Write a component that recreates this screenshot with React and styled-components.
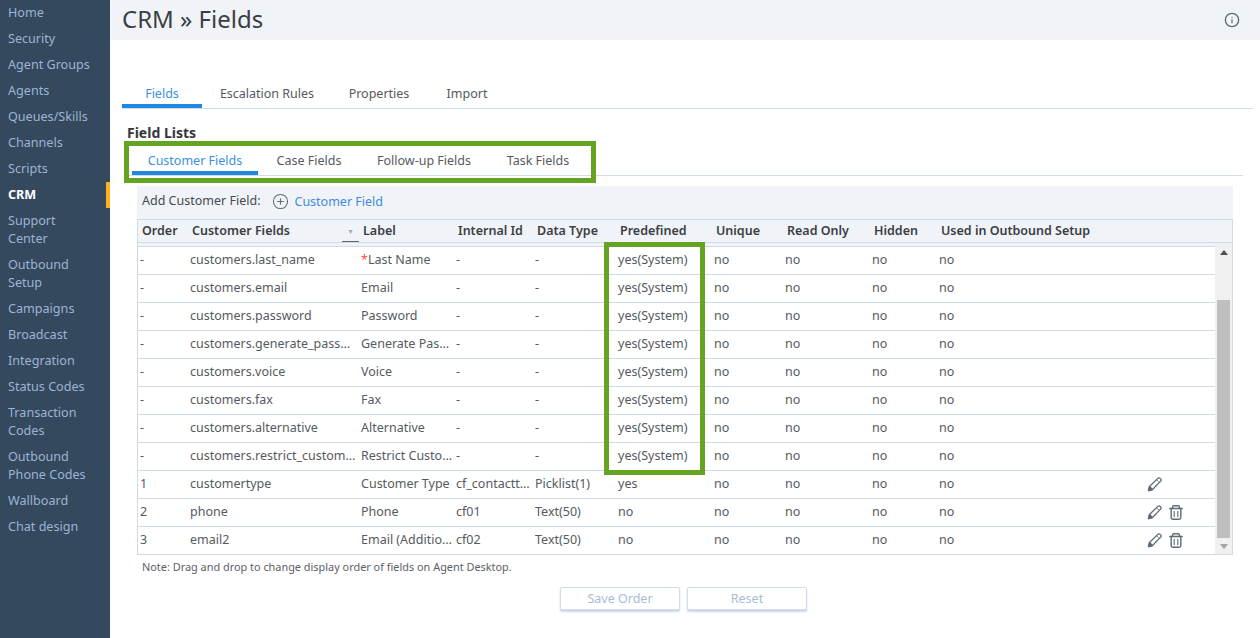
import styled, { createGlobalStyle } from 'styled-components';
import { Info, CirclePlus } from 'lucide-react';

const COLUMNS = '50px 171px 95px 79px 83px 96px 71px 87px 67px 208px 70px';

const GlobalStyle = createGlobalStyle`
  html, body { margin: 0; padding: 0; height: 100%; overflow: hidden; }
  body { font-family: "Noto Sans", "Open Sans", Arial, sans-serif; color: #4a4f57; }
`;

const Page = styled.div`
  display: flex;
  width: 1260px;
  height: 638px;
  background: #fff;
  overflow: hidden;
`;

const Sidebar = styled.nav`
  flex: 0 0 110px;
  background: #34495e;
`;
const SideItem = styled.div`
  box-sizing: border-box;
  padding: 4px 12px 4px 8px;
  font-size: 12.6px;
  line-height: 18px;
  color: ${(p) => (p.$active ? '#fff' : '#9db4d2')};
  font-weight: ${(p) => (p.$active ? 700 : 400)};
  border-right: 4px solid ${(p) => (p.$active ? '#fdb022' : 'transparent')};
`;

const Main = styled.main`
  flex: 1;
  min-width: 0;
`;
const Header = styled.header`
  box-sizing: border-box;
  height: 40px;
  background: #f0f3f8;
  display: flex;
  align-items: center;
  justify-content: space-between;
  padding: 0 20px 0 12px;
`;
const Title = styled.h1`
  margin: -3px 0 0;
  font-size: 24px;
  font-weight: 400;
  color: #3b3f45;
  line-height: 40px;
`;

const Tabs = styled.div`
  display: flex;
  border-bottom: 1px solid #d3dde9;
  height: 31px;
`;
const MainTabs = styled(Tabs)`
  margin: 37px 7px 0 12px;
`;
const SubTabs = styled(Tabs)`
  margin: 0 17px;
  padding-left: 5px;
`;
const Tab = styled.div`
  box-sizing: border-box;
  width: ${(p) => p.$width}px;
  text-align: center;
  font-size: 12.5px;
  line-height: 18px;
  padding-top: 8px;
  color: ${(p) => (p.$active ? '#3a90e2' : '#555a60')};
  border-bottom: 4px solid ${(p) => (p.$active ? '#1f88e0' : 'transparent')};
`;

const Section = styled.section`
  position: relative;
  padding-top: 15px;
`;
const SectionTitle = styled.h2`
  margin: 0 0 0 17px;
  height: 20px;
  font-size: 14px;
  line-height: 18px;
  font-weight: 700;
  color: #33373c;
`;
const Highlight = styled.div`
  position: absolute;
  box-sizing: border-box;
  border: 5px solid #65a323;
  pointer-events: none;
`;
const TabsHighlight = styled(Highlight)`
  left: 14px;
  top: 32px;
  width: 472px;
  height: 42px;
`;

const Panel = styled.div`
  margin: 10px 27px 0;
`;
const AddBar = styled.div`
  box-sizing: border-box;
  display: flex;
  align-items: center;
  height: 33px;
  background: #f0f3f8;
  padding: 0 0 4px 5px;
  font-size: 12.5px;
  color: #454a50;
`;
const AddLink = styled.span`
  display: flex;
  align-items: center;
  gap: 5px;
  margin: 2px 0 0 12px;
  color: #3f8ae0;
  svg { color: #666c74; }
`;

const TableBox = styled.div`
  position: relative;
  border: 1px solid #cfdbe8;
  height: 336px;
  box-sizing: border-box;
  background: #fff;
`;
const HeadRow = styled.div`
  display: grid;
  grid-template-columns: ${COLUMNS};
  height: 22px;
  background: #f0f3f8;
  border-bottom: 1px solid #cfdbe8;
  align-items: center;
`;
const HeadCell = styled.div`
  display: flex;
  align-items: center;
  padding-left: 4px;
  font-size: 12.5px;
  line-height: 20px;
  font-weight: 600;
  color: #3b3f45;
  white-space: nowrap;
`;
const SortMark = styled.span`
  margin-left: auto;
  width: 17px;
  height: 21px;
  box-sizing: border-box;
  border-bottom: 1px solid #5c6670;
  font-size: 7px;
  line-height: 21px;
  text-align: center;
  color: #a5aab0;
`;
const Body = styled.div`
  display: flex;
  height: 311px;
`;
const Rows = styled.div`
  width: 1077px;
  padding-top: 3px;
  box-sizing: border-box;
  background: linear-gradient(#f0f3f8 3px, #fff 3px);
`;
const Row = styled.div`
  display: grid;
  grid-template-columns: ${COLUMNS};
  height: ${(p) => (p.$first ? 29 : p.$last ? 27 : 28)}px;
  box-sizing: border-box;
  align-items: center;
  background: #fff;
  border-top: ${(p) => (p.$first ? '1px solid #cfdbe8' : 'none')};
  border-bottom: ${(p) => (p.$last ? 'none' : '1px solid #cfdbe8')};
`;
const Cell = styled.div`
  padding: 0 0 3px 2px;
  font-size: 12.5px;
  color: #555a60;
  white-space: nowrap;
  overflow: hidden;
  text-overflow: ellipsis;
`;
const Required = styled.span`
  color: #f0553c;
`;
const Actions = styled.div`
  display: flex;
  align-items: center;
  gap: 7px;
  padding-left: 2px;
  color: #5f6b78;
`;
const ColumnHighlight = styled(Highlight)`
  left: 466px;
  top: 22px;
  width: 101px;
  height: 233px;
`;

const Scrollbar = styled.div`
  position: relative;
  width: 17px;
  background: #f0f0f0;
  display: flex;
  flex-direction: column;
  align-items: center;
  justify-content: space-between;
  padding: 7px 0 5px;
  box-sizing: border-box;
`;
const Arrow = styled.span`
  width: 0;
  height: 0;
  border-left: 4px solid transparent;
  border-right: 4px solid transparent;
  border-bottom: ${(p) => (p.$down ? 'none' : '5px solid #505050')};
  border-top: ${(p) => (p.$down ? '5px solid #a3a3a3' : 'none')};
`;
const Thumb = styled.div`
  position: absolute;
  left: 2px;
  right: 2px;
  top: 57px;
  bottom: 16px;
  background: #bfbfbf;
`;

const Note = styled.div`
  margin: 5px 0 0 5px;
  font-size: 10.9px;
  line-height: 14px;
  color: #5b6066;
`;
const ButtonRow = styled.div`
  display: flex;
  justify-content: center;
  gap: 7px;
  margin-top: 13px;
  padding-right: 3px;
`;
const Button = styled.button`
  width: 120px;
  height: 23px;
  padding: 0;
  background: #fff;
  border: 1px solid #d4deeb;
  border-radius: 2px;
  box-shadow: 0 2px 2px #c9d5e5;
  font-family: inherit;
  font-size: 12.5px;
  color: #a9bcd6;
`;

const PencilIcon = () => (
  <svg width="15" height="15" viewBox="0 0 15 15" fill="none" stroke="currentColor" strokeWidth="1.3" strokeLinejoin="round">
    <path d="M1.5 13.5l1-4L10.6 1.6a1.9 1.9 0 0 1 2.8 2.8L5.5 12.5z" />
    <path d="M1.5 13.5l1-4 3 3z" fill="currentColor" />
    <path d="M9.5 2.8l2.7 2.7" strokeWidth="0.9" />
  </svg>
);

const TrashIcon = () => (
  <svg width="14" height="15" viewBox="0 0 14 15" fill="none" stroke="currentColor" strokeWidth="1.4" strokeLinecap="round">
    <path d="M.8 3.5h12.4" />
    <path d="M3.6 3.5V2a1.2 1.2 0 0 1 1.2-1.2h4.4A1.2 1.2 0 0 1 10.4 2v1.5" />
    <path d="M2.2 3.5v9a1.7 1.7 0 0 0 1.7 1.7h6.2a1.7 1.7 0 0 0 1.7-1.7v-9" />
    <path d="M5.2 6.2v5.6M8.8 6.2v5.6" strokeWidth="1.1" />
  </svg>
);

const navItems = [
  'Home', 'Security', 'Agent Groups', 'Agents', 'Queues/Skills', 'Channels',
  'Scripts', 'CRM', 'Support Center', 'Outbound Setup', 'Campaigns', 'Broadcast',
  'Integration', 'Status Codes', 'Transaction Codes', 'Outbound Phone Codes',
  'Wallboard', 'Chat design',
];

const headers = ['Order', 'Customer Fields', 'Label', 'Internal Id', 'Data Type', 'Predefined', 'Unique', 'Read Only', 'Hidden', 'Used in Outbound Setup', ''];

const sys = 'yes(System)';
const rows = [
  ['-', 'customers.last_name', 'Last Name', '-', '-', sys, 0],
  ['-', 'customers.email', 'Email', '-', '-', sys, 0],
  ['-', 'customers.password', 'Password', '-', '-', sys, 0],
  ['-', 'customers.generate_password', 'Generate Password', '-', '-', sys, 0],
  ['-', 'customers.voice', 'Voice', '-', '-', sys, 0],
  ['-', 'customers.fax', 'Fax', '-', '-', sys, 0],
  ['-', 'customers.alternative', 'Alternative', '-', '-', sys, 0],
  ['-', 'customers.restrict_customer_access', 'Restrict Customer', '-', '-', sys, 0],
  ['1', 'customertype', 'Customer Type', 'cf_contacttype', 'Picklist(1)', 'yes', 1],
  ['2', 'phone', 'Phone', 'cf01', 'Text(50)', 'no', 2],
  ['3', 'email2', 'Email (Additional)', 'cf02', 'Text(50)', 'no', 2],
];

export default function App() {
  return (
    <Page>
      <GlobalStyle />
      <Sidebar>
        {navItems.map((name) => (
          <SideItem key={name} $active={name === 'CRM'}>{name}</SideItem>
        ))}
      </Sidebar>
      <Main>
        <Header>
          <Title>CRM » Fields</Title>
          <Info size={16} color="#5f6b78" />
        </Header>
        <MainTabs>
          <Tab $width={80} $active>Fields</Tab>
          <Tab $width={130}>Escalation Rules</Tab>
          <Tab $width={94}>Properties</Tab>
          <Tab $width={82}>Import</Tab>
        </MainTabs>
        <Section>
          <SectionTitle>Field Lists</SectionTitle>
          <SubTabs>
            <Tab $width={126} $active>Customer Fields</Tab>
            <Tab $width={102}>Case Fields</Tab>
            <Tab $width={128}>Follow-up Fields</Tab>
            <Tab $width={100}>Task Fields</Tab>
          </SubTabs>
          <TabsHighlight />
          <Panel>
            <AddBar>
              Add Customer Field:
              <AddLink><CirclePlus size={17} strokeWidth={1.5} />Customer Field</AddLink>
            </AddBar>
            <TableBox>
              <HeadRow>
                {headers.map((h, i) => (
                  <HeadCell key={i}>{h}{i === 1 && <SortMark>▼</SortMark>}</HeadCell>
                ))}
              </HeadRow>
              <Body>
                <Rows>
                  {rows.map((r, i) => (
                    <Row key={r[1]} $first={i === 0} $last={i === rows.length - 1}>
                      <Cell>{r[0]}</Cell>
                      <Cell>{r[1]}</Cell>
                      <Cell>{i === 0 && <Required>*</Required>}{r[2]}</Cell>
                      <Cell>{r[3]}</Cell>
                      <Cell>{r[4]}</Cell>
                      <Cell>{r[5]}</Cell>
                      <Cell>no</Cell>
                      <Cell>no</Cell>
                      <Cell>no</Cell>
                      <Cell>no</Cell>
                      <Actions>
                        {r[6] > 0 && <PencilIcon />}
                        {r[6] > 1 && <TrashIcon />}
                      </Actions>
                    </Row>
                  ))}
                </Rows>
                <Scrollbar>
                  <Arrow />
                  <Thumb />
                  <Arrow $down />
                </Scrollbar>
              </Body>
              <ColumnHighlight />
            </TableBox>
            <Note>Note: Drag and drop to change display order of fields on Agent Desktop.</Note>
            <ButtonRow>
              <Button>Save Order</Button>
              <Button>Reset</Button>
            </ButtonRow>
          </Panel>
        </Section>
      </Main>
    </Page>
  );
}
